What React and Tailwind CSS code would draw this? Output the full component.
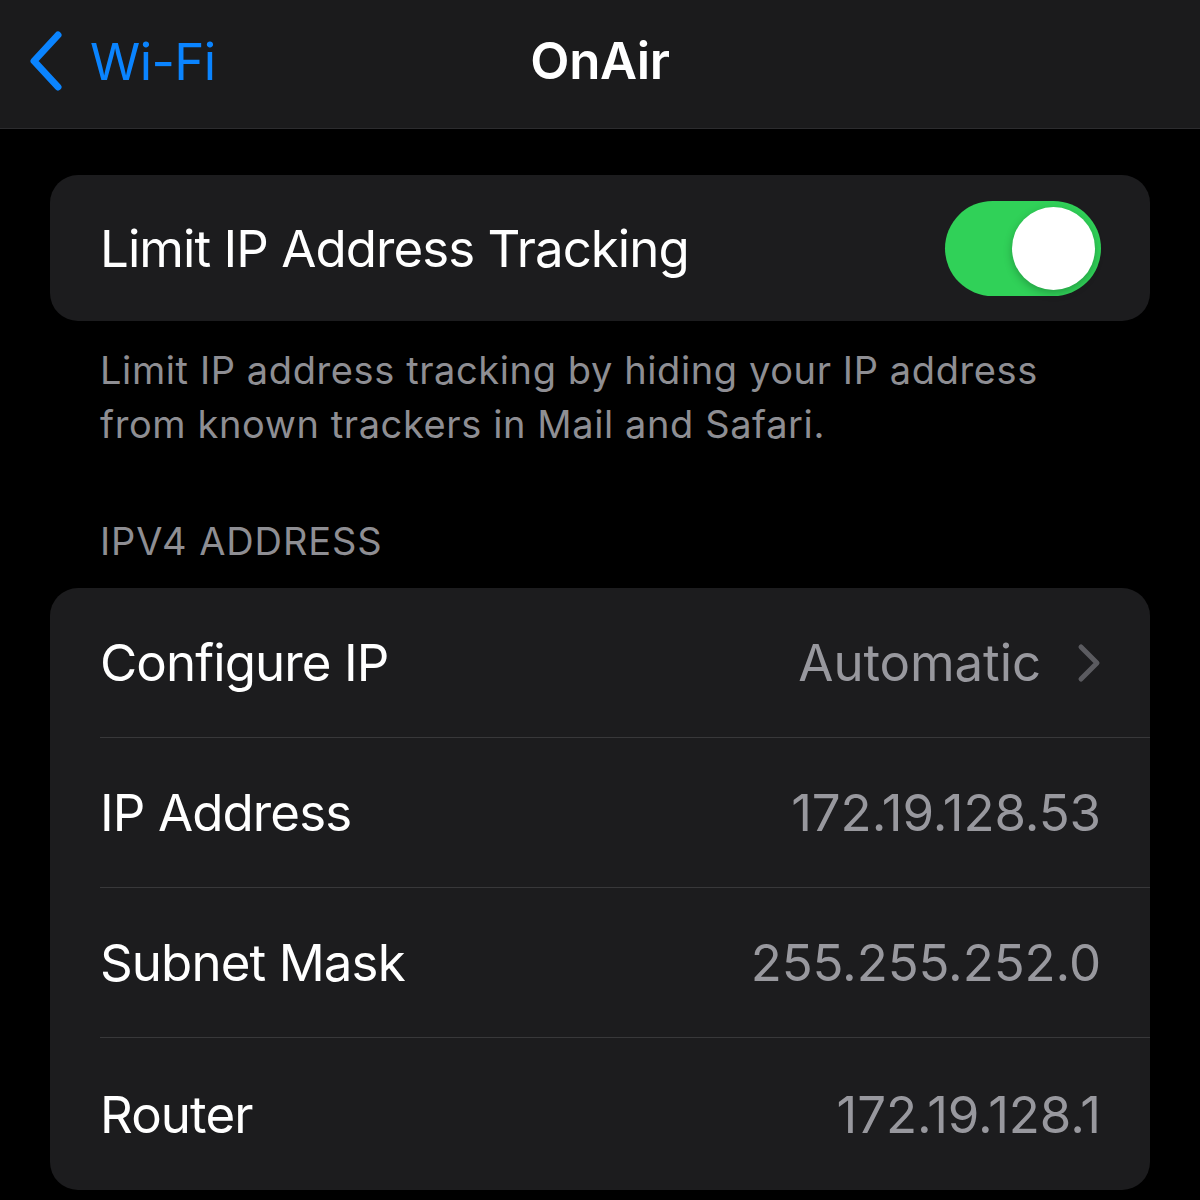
import React from 'react';

const rows = [
  { label: 'Configure IP', value: 'Automatic', chevron: true },
  { label: 'IP Address', value: '172.19.128.53' },
  { label: 'Subnet Mask', value: '255.255.252.0' },
  { label: 'Router', value: '172.19.128.1' },
];

const Toggle = () => (
  <div className="w-[156px] h-[95px] rounded-full bg-[#30d158] relative shrink-0">
    <div className="absolute right-[6px] top-[6px] w-[83px] h-[83px] rounded-full bg-white shadow-[0_3px_8px_rgba(0,0,0,0.25)]" />
  </div>
);

export default function App() {
  return (
    <div className="w-[1200px] h-[1200px] bg-black overflow-hidden font-['Inter','Noto_Sans',sans-serif] text-white">
      {/* Nav bar */}
      <header className="h-[129px] bg-[#1b1b1c] border-b border-[#2c2c2e] relative flex items-center">
        <div className="flex items-center pl-[28px] text-[#0a84ff]">
          <svg width="36" height="60" viewBox="0 0 36 60" className="mt-[-6px]">
            <path d="M30 4 L6 30 L30 56" fill="none" stroke="#0a84ff" strokeWidth="7" strokeLinecap="round" strokeLinejoin="round" />
          </svg>
          <span className="ml-[26px] text-[51px] leading-none tracking-[-0.6px] mt-[-6px]">Wi-Fi</span>
        </div>
        <div className="absolute inset-x-0 top-0 h-full flex items-center justify-center pointer-events-none">
          <span className="text-[51px] font-semibold leading-none mt-[-8px] tracking-[-0.4px]">OnAir</span>
        </div>
      </header>

      <main className="px-[50px] pt-[46px]">
        {/* Toggle card */}
        <section className="h-[146px] rounded-[28px] bg-[#1c1c1e] flex items-center justify-between pl-[50px] pr-[49px]">
          <span className="text-[51px] leading-none tracking-[-0.95px]">Limit IP Address Tracking</span>
          <Toggle />
        </section>

        <p className="px-[50px] pt-[22px] text-[38px] leading-[54px] text-[#8e8e93] tracking-[0.6px]">
          Limit IP address tracking by hiding your IP address<br />
          from known trackers in Mail and Safari.
        </p>

        <h2 className="px-[50px] pt-[68px] pb-[25px] text-[38px] leading-[44px] text-[#8e8e93] uppercase tracking-[0.9px]">
          IPv4 Address
        </h2>

        {/* IPv4 card */}
        <section className="rounded-[28px] bg-[#1c1c1e] overflow-hidden">
          {rows.map((row, i) => (
            <div key={row.label} className="pl-[50px]">
              <div
                className={`flex items-center justify-between pr-[49px] ${
                  i < rows.length - 1 ? 'h-[150px] border-b border-[#38383a]' : 'h-[152px]'
                }`}
              >
                <span className="text-[51px] leading-none tracking-[-0.9px]">{row.label}</span>
                <div className="flex items-center">
                  <span className="text-[51px] leading-none text-[#98989e] tracking-[-0.1px]">{row.value}</span>
                  {row.chevron && (
                    <svg width="24" height="40" viewBox="0 0 24 40" className="ml-[36px]">
                      <path d="M4 4 L20 20 L4 36" fill="none" stroke="#5b5b60" strokeWidth="5" strokeLinecap="round" strokeLinejoin="round" />
                    </svg>
                  )}
                </div>
              </div>
            </div>
          ))}
        </section>
      </main>
    </div>
  );
}
